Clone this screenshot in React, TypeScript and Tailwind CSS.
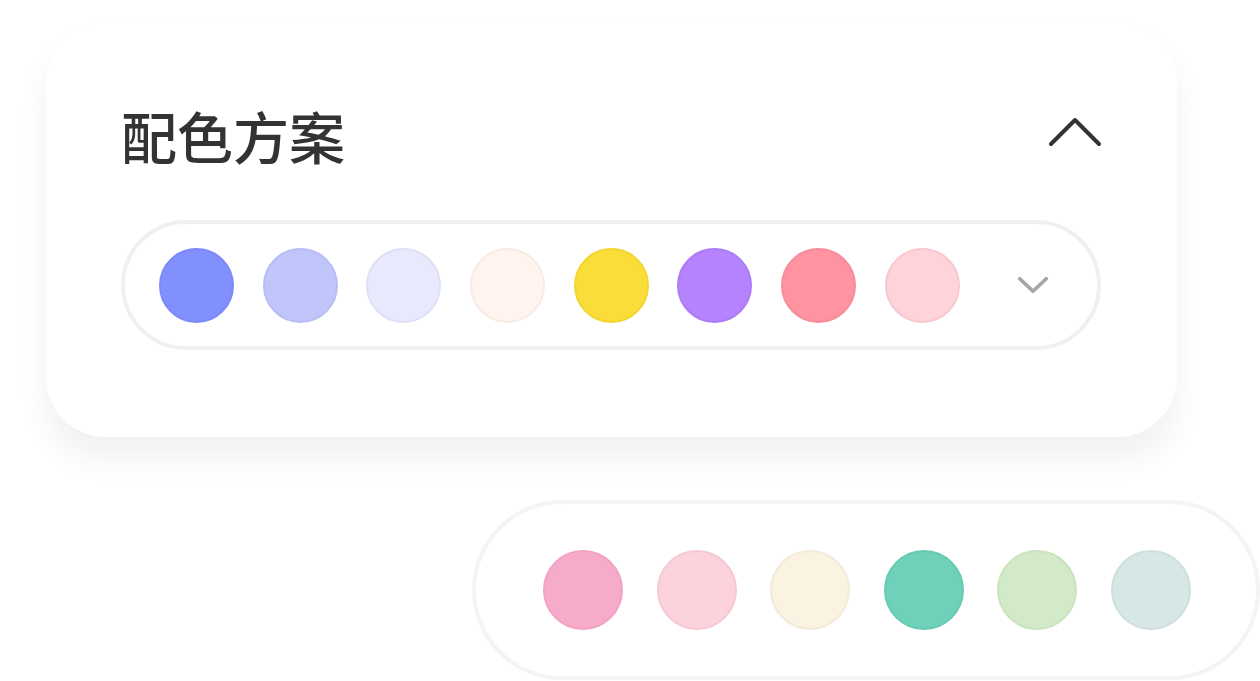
const topSwatches = [
  'bg-[#8290ff] border-[#7b8af8]',
  'bg-[#c0c6f9] border-[#b8bef5]',
  'bg-[#e8e9fc] border-[#dfe0f5]',
  'bg-[#fff5ee] border-[#f7ebe3]',
  'bg-[#fbdd3a] border-[#f3d530]',
  'bg-[#b483fd] border-[#ac7cf7]',
  'bg-[#ff93a1] border-[#f78c9a]',
  'bg-[#ffd3da] border-[#f8c8d0]',
]

const moreSwatches = [
  'bg-[#f7abca] border-[#f2a3c3]',
  'bg-[#fcd2dd] border-[#f6c9d5]',
  'bg-[#faf3e2] border-[#f1ebd8]',
  'bg-[#6fd1b9] border-[#68cab2]',
  'bg-[#d3eac8] border-[#cbe3c0]',
  'bg-[#d6e7e5] border-[#cde0de]',
]

export default function App() {
  return (
    <div className="w-[1260px] h-[681px] bg-white overflow-hidden font-['Noto_Sans_CJK_SC','Noto_Sans',sans-serif]">
      {/* 配色方案 卡片 */}
      <div className="ml-[46px] mt-[22px] w-[1131px] h-[415px] bg-white rounded-[60px] shadow-[0_22px_32px_rgba(0,0,0,0.06)] pt-[85px] pl-[75px] pr-[76px]">
        <div className="flex items-start justify-between">
          <h2 className="text-[56px] leading-none font-medium text-[#333333]">配色方案</h2>
          <svg width="56" height="32" viewBox="0 0 56 32" className="mt-[8px] mr-[-2px]">
            <polyline points="4,29 28,5 52,29" fill="none" stroke="#333333" strokeWidth="4" strokeLinecap="round" strokeLinejoin="round" />
          </svg>
        </div>

        <div className="mt-[57px] w-[980px] h-[130px] rounded-full border-4 border-[#f0f0f0] flex items-center pl-[34px]">
          <div className="flex items-center gap-[28.7px]">
            {topSwatches.map(cls => (
              <div key={cls} className={`w-[75px] h-[75px] rounded-full border-2 ${cls}`} />
            ))}
          </div>
          <svg width="34" height="20" viewBox="0 0 34 20" className="ml-[56px]">
            <polyline points="3.75,3.75 17,16.25 30.25,3.75" fill="none" stroke="#a6a6a6" strokeWidth="3.75" strokeLinecap="round" strokeLinejoin="round" />
          </svg>
        </div>
      </div>

      {/* 展开后的更多颜色 */}
      <div className="ml-[472px] mt-[63px] w-[788px] h-[180px] rounded-full border-4 border-[#f4f4f4] flex items-center pl-[67px] gap-[33.6px]">
        {moreSwatches.map(cls => (
          <div key={cls} className={`w-[80px] h-[80px] rounded-full border-2 ${cls}`} />
        ))}
      </div>
    </div>
  )
}
